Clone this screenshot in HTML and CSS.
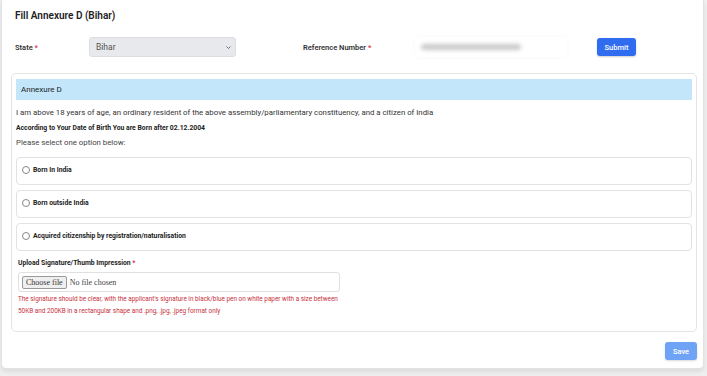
FILE: index.html
```html
<!DOCTYPE html>
<html>
<head>
<meta charset="utf-8">
<link rel="stylesheet" href="styles.css">
</head>
<body>
<div class="modal">
  <h1 class="title">Fill Annexure D (Bihar)</h1>
  <div class="toprow">
    <label class="lbl state-lbl">State <span class="req">*</span></label>
    <div class="select"><span>Bihar</span><svg class="chev" viewBox="0 0 10 6" width="5" height="3"><path d="M1 1l4 4 4-4" fill="none" stroke="#555" stroke-width="1.6"/></svg></div>
    <label class="lbl ref-lbl">Reference Number <span class="req">*</span></label>
    <div class="refbox"><div class="blurbar"></div></div>
    <button class="btn submit">Submit</button>
  </div>
  <div class="card">
    <div class="band">Annexure D</div>
    <p class="para intro">I am above 18 years of age, an ordinary resident of the above assembly/parliamentary constituency, and a citizen of India</p>
    <p class="bold-line">According to Your Date of Birth You are Born after 02.12.2004</p>
    <p class="para select-line">Please select one option below:</p>
    <div class="options">
      <label class="opt"><span class="radio"></span><span>Born In India</span></label>
      <label class="opt"><span class="radio"></span><span>Born outside India</span></label>
      <label class="opt"><span class="radio"></span><span>Acquired citizenship by registration/naturalisation</span></label>
    </div>
    <div class="upload">
      <div class="bold-line up-lbl">Upload Signature/Thumb Impression <span class="req">*</span></div>
      <div class="filebox"><span class="choose">Choose file</span><span class="nofile">No file chosen</span></div>
      <p class="hint">The signature should be clear, with the applicant's signature in black/blue pen on white paper with a size between<br>50KB and 200KB in a rectangular shape and .png, .jpg, .jpeg format only</p>
    </div>
  </div>
  <div class="footer"><button class="btn save">Save</button></div>
</div>
</body>
</html>
```
FILE: styles.css
```css
html, body { margin: 0; padding: 0; }
body {
  background: #efefef;
  font-family: Roboto, "Liberation Sans", Arial, sans-serif;
  color: #333;
  width: 707px;
  height: 376px;
  overflow: hidden;
}
.modal {
  background: #fff;
  margin: 0 3px 0 1px;
  height: 369px;
  box-sizing: border-box;
  border: 1px solid #e2e2e2;
  border-top: none;
  border-radius: 0 0 5px 5px;
  box-shadow: 0 3px 4px rgba(0,0,0,0.08);
  padding: 9px 6px 0 9px;
}
.title {
  margin: 0 0 0 4px;
  font-size: 10px;
  font-weight: 600;
  color: #222;
  line-height: 14px;
}
.toprow {
  display: flex;
  align-items: center;
  height: 20px;
  margin-top: 14px;
  padding-left: 4px;
}
.lbl { font-size: 7.5px; font-weight: 600; color: #333; }
.req { color: #d9363e; }
.state-lbl { width: 74px; }
.select {
  width: 147px;
  height: 20px;
  box-sizing: border-box;
  background: #e8e9ec;
  border: 1px solid #dcdde0;
  border-radius: 3px;
  display: flex;
  align-items: center;
  justify-content: space-between;
  padding: 0 4px 0 6px;
  font-size: 8.5px;
  color: #555;
}
.ref-lbl { margin-left: 67px; width: 112px; }
.refbox {
  width: 152px; height: 20px; display: flex; align-items: center;
  border-radius: 3px;
  box-shadow: 0 0 4px rgba(0,0,0,0.03);
}
.blurbar {
  width: 100px; height: 6px; margin-left: 6px;
  background: #c9c9c9; border-radius: 3px; filter: blur(2px);
}
.btn {
  border: none;
  border-radius: 3px;
  color: #fff;
  font-family: inherit;
  font-size: 7.5px;
  font-weight: 500;
  padding: 0;
}
.submit {
  margin-left: 30px;
  width: 39px; height: 18px;
  background: #2f6cf0;
  box-shadow: 0 1px 2px rgba(0,0,0,0.2);
}
.card {
  margin-top: 16px;
  border: 1px solid #e4e4e4;
  border-radius: 5px;
  height: 259px;
  box-sizing: border-box;
  padding: 5px 4px 0 4px;
}
.band {
  background: #c3e6fa;
  height: 21px;
  box-sizing: border-box;
  padding-left: 5px;
  display: flex;
  align-items: center;
  font-size: 8px;
  color: #222;
}
.para { margin: 0; font-size: 7.8px; color: #333; }
.intro { margin-top: 7px; line-height: 11px; }
.bold-line { margin: 6px 0 0; font-size: 6.8px; font-weight: 700; color: #222; line-height: 9px; }
.select-line { margin-top: 4px; line-height: 11px; color: #444; }
.options { margin-top: 9px; display: flex; flex-direction: column; gap: 5px; }
.opt {
  height: 28px;
  box-sizing: border-box;
  border: 1px solid #e2e2e2;
  border-radius: 4px;
  display: flex;
  align-items: flex-start;
  padding: 8px 0 0 5px;
  font-size: 6.8px;
  font-weight: 700;
  color: #222;
  line-height: 8px;
}
.radio {
  width: 6px; height: 6px;
  border: 1px solid #888;
  border-radius: 50%;
  margin-right: 3px;
  flex: none;
}
.upload { padding-left: 2px; margin-top: 8px; }
.up-lbl { margin: 0; }
.filebox {
  margin-top: 4px;
  width: 322px; height: 20px;
  box-sizing: border-box;
  border: 1px solid #e0e0e0;
  border-radius: 3px;
  display: flex;
  align-items: center;
  padding-left: 3px;
  font-family: "Liberation Serif", "Times New Roman", serif;
  font-size: 8px;
  color: #444;
}
.choose {
  background: #efefef;
  border: 1px solid #9a9a9a;
  border-radius: 2px;
  padding: 1px 3px;
  margin-right: 3px;
  color: #333;
}
.hint {
  margin: 1px 0 0;
  font-size: 6.4px;
  line-height: 12px;
  color: #c8323e;
}
.footer { display: flex; justify-content: flex-end; margin-top: 10px; }
.save {
  width: 32px; height: 18px;
  background: #6fa3f5;
  box-shadow: 0 1px 2px rgba(0,0,0,0.15);
}
```
